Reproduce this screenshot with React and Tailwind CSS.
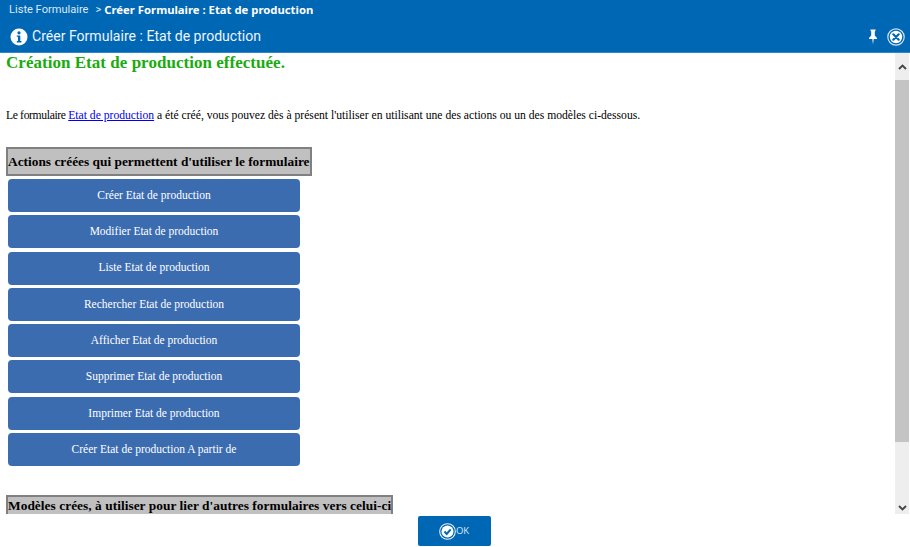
const actions = [
  "Créer Etat de production",
  "Modifier Etat de production",
  "Liste Etat de production",
  "Rechercher Etat de production",
  "Afficher Etat de production",
  "Supprimer Etat de production",
  "Imprimer Etat de production",
  "Créer Etat de production A partir de",
];

function Heading({ children, className = "" }) {
  return (
    <div className={"w-fit border-2 border-[#808080] bg-[#c0c0c0] font-bold text-black " + className}>
      {children}
    </div>
  );
}

export default function App() {
  return (
    <div className="flex h-[547px] w-[910px] flex-col overflow-hidden bg-white font-['Liberation_Serif',serif]">
      <header className="h-[53px] shrink-0 border-b border-[#2f86c8] bg-[#0067b5] text-white font-['Roboto',sans-serif]">
        <div className="flex h-[19px] items-center pl-[9px] text-[11.08px] leading-[19px]">
          <span className="text-[#dfe9f3]">Liste Formulaire</span>
          <span className="ml-[7px] text-[#dfe9f3]">&gt;</span>
          <span className="ml-[3px] font-['Noto_Sans',sans-serif] font-bold text-[11.3px]">Créer Formulaire : Etat de production</span>
        </div>
        <div className="flex h-[33px] items-center pl-[10px] pr-[5px] pt-[2px]">
          <svg width="18" height="18" viewBox="0 0 18 18" className="shrink-0">
            <circle cx="9" cy="9" r="8.5" fill="#fff" />
            <circle cx="9" cy="4.8" r="1.6" fill="#0067b5" />
            <path d="M6.8 7.4h3.5v5.6h1.2v1.4H6.8V13h1.2V8.8H6.8z" fill="#0067b5" />
          </svg>
          <span className="ml-[4px] text-[14.07px] text-[#eef4fa]">Créer Formulaire : Etat de production</span>
          <svg width="10" height="16" viewBox="0 0 10 16" className="ml-auto mr-[9px] shrink-0">
            <path d="M2.5 0.5h5v1.2L6.8 2.4v4.2L9 9v1H5.7l-.7 5.5L4.3 10H1V9l2.2-2.4V2.4L2.5 1.7z" fill="#fff" />
          </svg>
          <svg width="18" height="18" viewBox="0 0 18 18" className="shrink-0">
            <circle cx="9" cy="9" r="8.2" fill="none" stroke="#cfe2f2" strokeWidth="1.2" />
            <circle cx="9" cy="9" r="6.2" fill="#fff" />
            <path d="M6.3 6.3l5.4 5.4M11.7 6.3l-5.4 5.4" stroke="#0067b5" strokeWidth="2.2" strokeLinecap="round" />
          </svg>
        </div>
      </header>

      <div className="flex h-[461px] shrink-0">
        <main className="min-w-0 flex-1 overflow-hidden pl-[6px] text-black">
          <h1 className="text-[17px] font-bold leading-[19px] tracking-[0.03px] text-[#1aab0f]">Création Etat de production effectuée.</h1>
          <p className="mt-[37px] text-[11.64px] leading-[13px]">
            <span className="tracking-[-0.35px]">Le formulaire </span>
            <a className="text-[#0000ee] underline">Etat de production</a> a été créé, vous pouvez dès à présent l'utiliser en utilisant une des actions ou un des modèles ci-dessous.
          </p>
          <Heading className="mt-[25px] text-[13.36px] leading-[25px]">Actions créées qui permettent d'utiliser le formulaire</Heading>
          <div className="mt-[3px] ml-[2px] flex w-[292px] flex-col gap-[3.3px]">
            {actions.map((a) => (
              <button key={a} className="h-[33px] rounded-[4px] bg-[#3c6cb0] text-center text-[11.5px] text-white">
                {a}
              </button>
            ))}
          </div>
          <Heading className="mt-[29px] text-[13.4px] leading-[17px] tracking-[0.03px]">Modèles crées, à utiliser pour lier d'autres formulaires vers celui-ci</Heading>
        </main>
        <div className="flex w-[14px] shrink-0 flex-col items-center bg-[#eeeeee]">
          <div className="flex h-[27px] w-full items-center justify-center">
            <svg width="9" height="6" viewBox="0 0 9 6"><path d="M1 5l3.5-3.5L8 5" fill="none" stroke="#444" strokeWidth="1.8" /></svg>
          </div>
          <div className="h-[362px] w-full bg-[#c4c4c4]"></div>
          <div className="flex flex-1 items-end justify-center pb-[3px]">
            <svg width="9" height="6" viewBox="0 0 9 6"><path d="M1 1l3.5 3.5L8 1" fill="none" stroke="#444" strokeWidth="1.8" /></svg>
          </div>
        </div>
        <div className="w-px shrink-0 bg-white"></div>
      </div>

      <footer className="flex flex-1 justify-center pt-[2px] pr-[2px]">
        <button className="flex h-[30px] w-[73px] items-center justify-center rounded-[2px] bg-[#0067b5] text-[9.5px] text-[#dbe8f3] font-['Open_Sans',sans-serif]">
          <svg width="17" height="17" viewBox="0 0 17 17" className="shrink-0">
            <circle cx="8.5" cy="8.5" r="7.8" fill="none" stroke="#e6f0f8" strokeWidth="1.1" />
            <circle cx="8.5" cy="8.5" r="6" fill="#fff" />
            <path d="M5.5 8.5l2.2 2.4 4-4.6" fill="none" stroke="#0067b5" strokeWidth="2" />
          </svg>
          <span>OK</span>
        </button>
      </footer>
    </div>
  );
}
